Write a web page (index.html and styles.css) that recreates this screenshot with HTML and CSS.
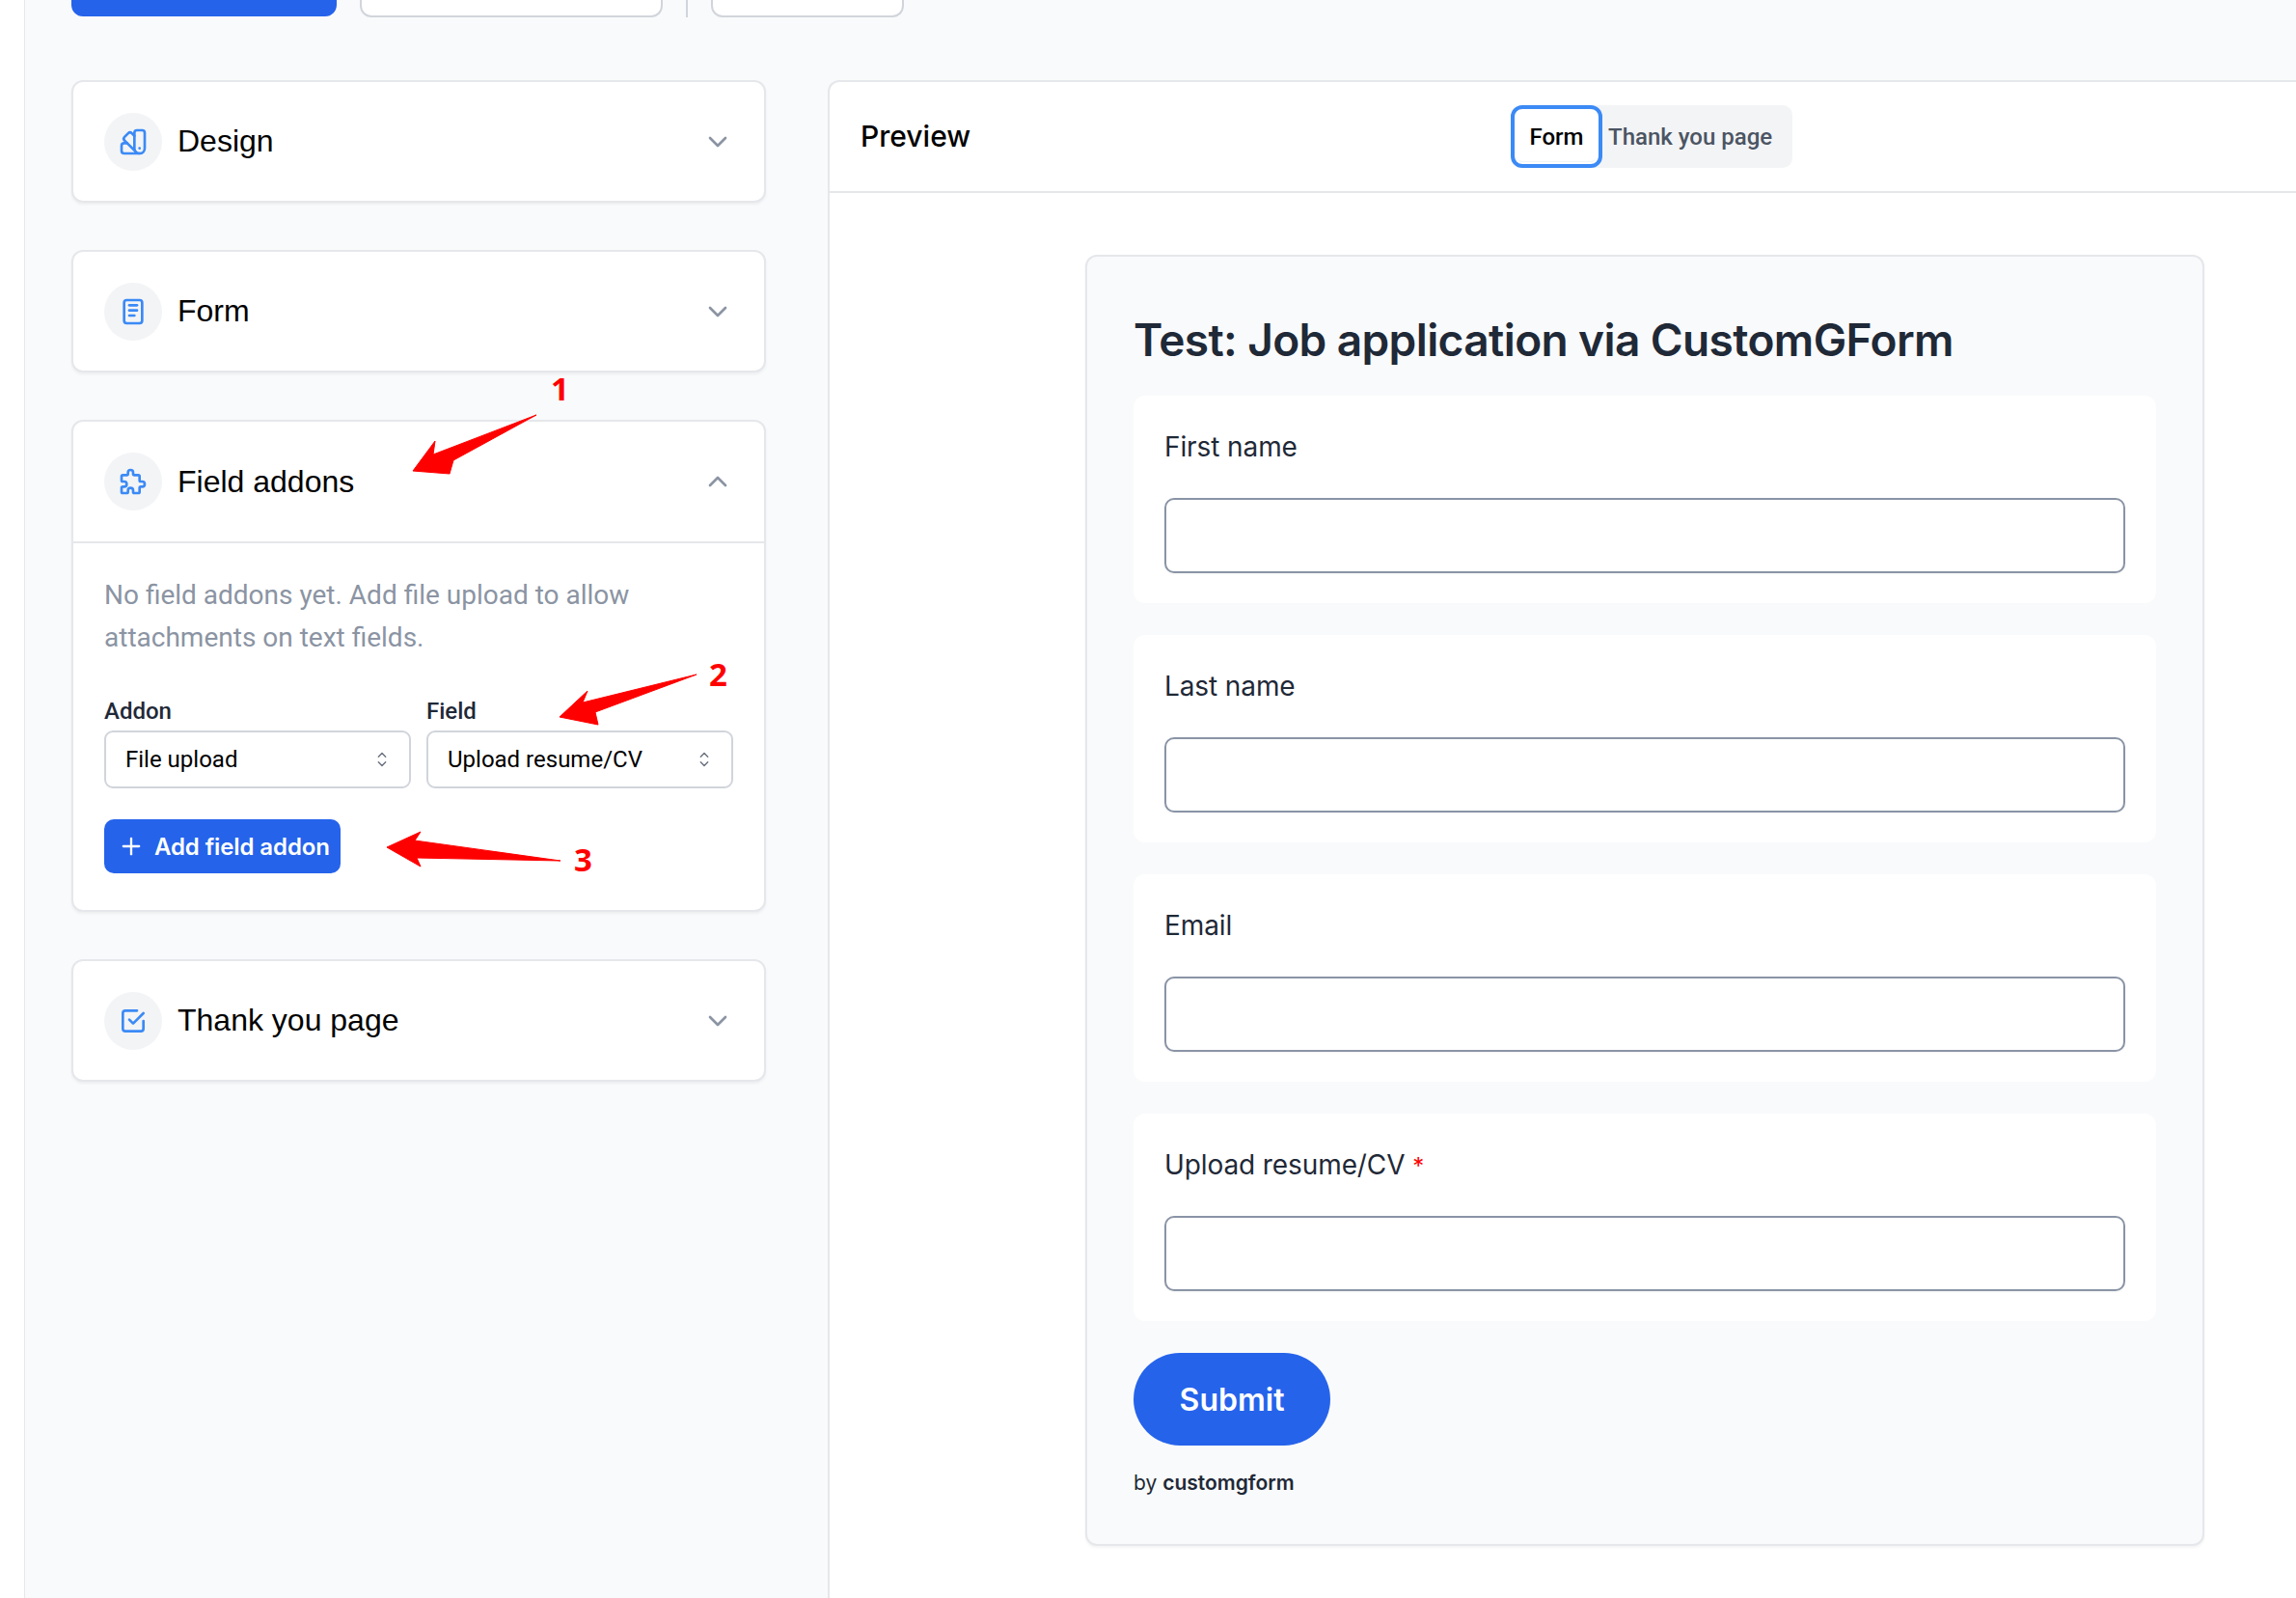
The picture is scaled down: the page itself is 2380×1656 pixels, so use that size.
FILE: index.html
```html
<!DOCTYPE html>
<html lang="en">
<head>
    <meta charset="UTF-8">
    <meta name="viewport" content="width=device-width, initial-scale=1.0">
    <title>Form builder</title>
    <link rel="stylesheet" href="styles.css">
</head>
<body>
    <div class="page">
        <div class="strip"></div>
        <main class="main">
            <div class="toolbar">
                <div class="tool tool-primary"></div>
                <div class="tool tool-wide"></div>
                <div class="tool-divider"></div>
                <div class="tool tool-small"></div>
            </div>

            <div class="columns">
                <div class="sidebar">
                    <section class="card">
                        <div class="card-head">
                            <span class="icon-circle">
                                <svg class="icon" viewBox="0 0 24 24"><path d="M19 3h-4a2 2 0 0 0 -2 2v12a4 4 0 0 0 8 0v-12a2 2 0 0 0 -2 -2"/><path d="M13 7.35l-2 -2a2 2 0 0 0 -2.828 0l-2.828 2.828a2 2 0 0 0 0 2.828l9 9"/><path d="M7.3 13h-2.3a2 2 0 0 0 -2 2v4a2 2 0 0 0 2 2h12"/><path d="M17 17v.01"/></svg>
                            </span>
                            <span class="card-title">Design</span>
                            <svg class="chevron" viewBox="0 0 24 24"><path d="M6 9l6 6l6 -6"/></svg>
                        </div>
                    </section>

                    <section class="card">
                        <div class="card-head">
                            <span class="icon-circle">
                                <svg class="icon" viewBox="0 0 24 24"><path d="M5 5a2 2 0 0 1 2 -2h10a2 2 0 0 1 2 2v14a2 2 0 0 1 -2 2h-10a2 2 0 0 1 -2 -2z"/><path d="M9 7h6"/><path d="M9 11h6"/><path d="M9 15h4"/></svg>
                            </span>
                            <span class="card-title">Form</span>
                            <svg class="chevron" viewBox="0 0 24 24"><path d="M6 9l6 6l6 -6"/></svg>
                        </div>
                    </section>

                    <section class="card">
                        <div class="card-head card-head-open">
                            <span class="icon-circle">
                                <svg class="icon" viewBox="0 0 24 24"><path d="M4 7h3a1 1 0 0 0 1 -1v-1a2 2 0 0 1 4 0v1a1 1 0 0 0 1 1h3a1 1 0 0 1 1 1v3a1 1 0 0 0 1 1h1a2 2 0 0 1 0 4h-1a1 1 0 0 0 -1 1v3a1 1 0 0 1 -1 1h-3a1 1 0 0 1 -1 -1v-1a2 2 0 0 0 -4 0v1a1 1 0 0 1 -1 1h-3a1 1 0 0 1 -1 -1v-3a1 1 0 0 1 1 -1h1a2 2 0 0 0 0 -4h-1a1 1 0 0 1 -1 -1v-3a1 1 0 0 1 1 -1"/></svg>
                            </span>
                            <span class="card-title">Field addons</span>
                            <svg class="chevron" viewBox="0 0 24 24"><path d="M6 15l6 -6l6 6"/></svg>
                        </div>
                        <div class="card-body">
                            <p class="hint">No field addons yet. Add file upload to allow attachments on text fields.</p>
                            <div class="select-row">
                                <div class="select-group">
                                    <div class="select-label">Addon</div>
                                    <div class="select">
                                        <span>File upload</span>
                                        <svg class="selector" viewBox="0 0 24 24"><path d="M8 9l4 -4l4 4"/><path d="M16 15l-4 4l-4 -4"/></svg>
                                    </div>
                                </div>
                                <div class="select-group">
                                    <div class="select-label">Field</div>
                                    <div class="select">
                                        <span>Upload resume/CV</span>
                                        <svg class="selector" viewBox="0 0 24 24"><path d="M8 9l4 -4l4 4"/><path d="M16 15l-4 4l-4 -4"/></svg>
                                    </div>
                                </div>
                            </div>
                            <button class="add-button" type="button">
                                <svg class="plus" viewBox="0 0 24 24"><path d="M12 5v14"/><path d="M5 12h14"/></svg>
                                Add field addon
                            </button>
                        </div>
                    </section>

                    <section class="card">
                        <div class="card-head">
                            <span class="icon-circle">
                                <svg class="icon" viewBox="0 0 24 24"><path d="M9 11l3 3l8 -8"/><path d="M20 12v6a2 2 0 0 1 -2 2h-12a2 2 0 0 1 -2 -2v-12a2 2 0 0 1 2 -2h9"/></svg>
                            </span>
                            <span class="card-title">Thank you page</span>
                            <svg class="chevron" viewBox="0 0 24 24"><path d="M6 9l6 6l6 -6"/></svg>
                        </div>
                    </section>
                </div>

                <section class="preview">
                    <div class="preview-head">
                        <div class="preview-title">Preview</div>
                        <div class="tabs">
                            <button class="tab tab-active" type="button">Form</button>
                            <button class="tab" type="button">Thank you page</button>
                        </div>
                    </div>
                    <div class="preview-body">
                        <div class="form-card">
                            <h1>Test: Job application via CustomGForm</h1>
                            <div class="field">
                                <label for="first">First name</label>
                                <input id="first" type="text">
                            </div>
                            <div class="field">
                                <label for="last">Last name</label>
                                <input id="last" type="text">
                            </div>
                            <div class="field">
                                <label for="email">Email</label>
                                <input id="email" type="text">
                            </div>
                            <div class="field">
                                <label for="resume">Upload resume/CV <span class="req">*</span></label>
                                <input id="resume" type="text">
                            </div>
                            <button class="submit-button" type="button">Submit</button>
                            <div class="byline">by <b>customgform</b></div>
                        </div>
                    </div>
                </section>
            </div>
        </main>

        <!-- red annotations drawn on top of the screenshot -->
        <svg class="arrows" viewBox="0 0 2380 1656">
            <path d="M556 430 L470 477 L466 491 L428 488 L451 457 L449 471 Z"/>
            <path d="M722 699 L617 738 L620 751 L580 743 L609 716 L604 728 Z"/>
            <path d="M581 892 L432 889 L436 898 L401 878 L436 862 L430 871 Z"/>
        </svg>
        <span class="note note-1">1</span>
        <span class="note note-2">2</span>
        <span class="note note-3">3</span>
    </div>
</body>
</html>
```

FILE: styles.css
```css
* {
    box-sizing: border-box;
}
body {
    margin: 0;
    font-family: Inter, "Liberation Sans", sans-serif;
    background-color: #fff;
    color: #000;
}
.page {
    position: relative;
    display: flex;
    height: 1656px;
    overflow: hidden;
}
.strip {
    width: 26px;
    flex: none;
    background-color: #fff;
    border-right: 1px solid #e5e7eb;
}
.main {
    flex: 1;
    min-width: 0;
    background-color: #f9fafb;
    padding-left: 48px;
}

/* top bar, cut off by the screenshot */
.toolbar {
    display: flex;
    align-items: flex-start;
    height: 18px;
}
.tool {
    height: 18px;
    border-radius: 0 0 12px 12px;
    background-color: #fff;
    border: 2px solid #d1d5db;
    border-top: none;
}
.tool-primary {
    width: 275px;
    height: 17px;
    background-color: #2563eb;
    border: none;
    margin-right: 24px;
}
.tool-wide {
    width: 314px;
}
.tool-divider {
    width: 2px;
    height: 18px;
    background-color: #d1d5db;
    margin: 0 24px;
}
.tool-small {
    width: 200px;
}

.columns {
    display: flex;
    gap: 64px;
    margin-top: 65px;
}
.sidebar {
    width: 720px;
    flex: none;
    display: flex;
    flex-direction: column;
    gap: 49px;
}
.card {
    background-color: #fff;
    border: 2px solid #e5e7eb;
    border-radius: 12px;
    box-shadow: 0 2px 3px rgba(0, 0, 0, 0.05);
}
.card-head {
    display: flex;
    align-items: center;
    height: 123px;
    padding: 0 32px;
}
.card-head-open {
    height: 126px;
    border-bottom: 2px solid #e5e7eb;
}
.icon-circle {
    width: 60px;
    height: 60px;
    flex: none;
    display: flex;
    align-items: center;
    justify-content: center;
    border-radius: 50%;
    background-color: #f3f4f6;
    margin-right: 16px;
}
.icon {
    width: 32px;
    height: 32px;
    fill: none;
    stroke: #3b8af6;
    stroke-width: 2;
    stroke-linecap: round;
    stroke-linejoin: round;
}
.card-title {
    flex: 1;
    font-family: "Liberation Sans", Arial, sans-serif;
    font-size: 32px;
}
.chevron {
    width: 32px;
    height: 32px;
    fill: none;
    stroke: #8b94a3;
    stroke-width: 2;
    stroke-linecap: round;
    stroke-linejoin: round;
}
.card-body {
    padding: 32px 32px 38px;
    font-family: Roboto, "Liberation Sans", sans-serif;
}
.hint {
    margin: 0 0 38px;
    font-size: 28px;
    line-height: 44px;
    color: #8b94a3;
}
.select-row {
    display: flex;
    gap: 16px;
}
.select-group {
    width: 318px;
}
.select-label {
    font-size: 24px;
    line-height: 32px;
    font-weight: 500;
    color: #1f2937;
    margin-bottom: 4px;
}
.select {
    display: flex;
    align-items: center;
    justify-content: space-between;
    height: 60px;
    padding: 0 17px 0 20px;
    background-color: #fff;
    border: 2px solid #d1d5db;
    border-radius: 9px;
    font-size: 24px;
}
.selector {
    width: 22px;
    height: 22px;
    fill: none;
    stroke: #6b7280;
    stroke-width: 1.6;
    stroke-linecap: round;
    stroke-linejoin: round;
}
.add-button {
    display: flex;
    align-items: center;
    gap: 10px;
    height: 56px;
    margin-top: 32px;
    padding: 0 11px 0 14px;
    background-color: #2563eb;
    color: #fff;
    border: none;
    border-radius: 10px;
    font-family: Inter, sans-serif;
    font-size: 24px;
    font-weight: 600;
    letter-spacing: -0.1px;
}
.plus {
    width: 28px;
    height: 28px;
    fill: none;
    stroke: #fff;
    stroke-width: 2;
    stroke-linecap: round;
}

/* preview panel */
.preview {
    flex: 1;
    min-width: 0;
    height: 1600px;
    background-color: #fff;
    border: 2px solid #e5e7eb;
    border-right: none;
    border-bottom: none;
    border-top-left-radius: 12px;
}
.preview-head {
    display: flex;
    align-items: center;
    height: 115px;
    padding: 0 32px;
    border-bottom: 2px solid #e5e7eb;
}
.preview-title {
    font-size: 30px;
    font-weight: 500;
    width: 674px;
    padding-bottom: 2px;
}
.tabs {
    display: flex;
    align-items: center;
    height: 65px;
    background-color: #f3f4f6;
    border-radius: 10px;
    padding-right: 21px;
}
.tab {
    padding: 0;
    border: none;
    background: none;
    font-family: Roboto, sans-serif;
    font-size: 24px;
    font-weight: 500;
    color: #4b5563;
}
.tab-active {
    width: 95px;
    height: 65px;
    margin-right: 6px;
    background-color: #fff;
    color: #000;
    border: 4px solid #3b8af6;
    border-radius: 12px;
    box-shadow: inset 0 0 0 2px #fff, inset 0 -4px 2px -2px #d1d5db;
}
.preview-body {
    padding: 64px 0 0 265px;
}
.form-card {
    width: 1160px;
    height: 1338px;
    padding: 0 48px;
    background-color: #f9fafb;
    border: 2px solid #e5e7eb;
    border-radius: 12px;
    box-shadow: 0 2px 3px rgba(0, 0, 0, 0.05);
}
.form-card h1 {
    margin: 56px 0 28px;
    font-size: 46px;
    line-height: 60px;
    letter-spacing: -0.6px;
    font-weight: 600;
    color: #1f2937;
}
.field {
    height: 215px;
    margin-bottom: 33px;
    padding: 32px 32px 0;
    background-color: #fff;
    border-radius: 12px;
}
.field label {
    display: block;
    height: 42px;
    font-size: 28px;
    line-height: 42px;
    letter-spacing: -0.1px;
    color: #1f2937;
    margin-bottom: 32px;
}
.req {
    color: #f00;
    font-size: 24px;
}
.field input {
    display: block;
    width: 100%;
    height: 78px;
    background-color: #fff;
    border: 2px solid #8a94a6;
    border-radius: 10px;
    box-shadow: 0 1px 2px rgba(0, 0, 0, 0.05);
}
.submit-button {
    display: block;
    width: 204px;
    height: 96px;
    padding: 0;
    background-color: #2563eb;
    color: #fff;
    border: none;
    border-radius: 48px;
    font-family: inherit;
    font-size: 32px;
    font-weight: 600;
}
.byline {
    margin-top: 25px;
    font-size: 21px;
    line-height: 28px;
    color: #1f2937;
}
.byline b {
    font-weight: 600;
}

/* annotations */
.arrows {
    position: absolute;
    left: 0;
    top: 0;
    width: 2380px;
    height: 1656px;
    fill: #f00;
    stroke: #f00;
    stroke-width: 1;
    stroke-linejoin: round;
}
.note {
    position: absolute;
    font-family: "Open Sans", sans-serif;
    font-size: 33px;
    line-height: 36px;
    font-weight: 700;
    color: #f00;
}
.note-1 {
    left: 571px;
    top: 385px;
}
.note-2 {
    left: 735px;
    top: 681px;
}
.note-3 {
    left: 595px;
    top: 873px;
}
```
